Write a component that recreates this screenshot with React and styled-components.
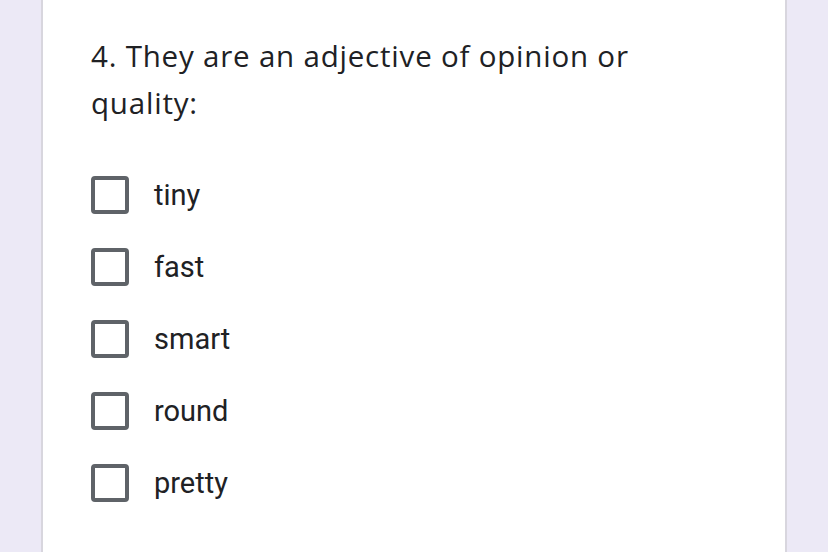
import React from "react";
import styled, { createGlobalStyle } from "styled-components";

const GlobalStyle = createGlobalStyle`
  html, body {
    margin: 0;
    padding: 0;
    background: #ece9f6;
  }
`;

const options = ["tiny", "fast", "smart", "round", "pretty"];

export default function App() {
  return (
    <Page>
      <GlobalStyle />
      <Card>
        <Title>4. They are an adjective of opinion or quality:</Title>
        <Options>
          {options.map((opt) => (
            <Option key={opt}>
              <Box />
              <Label>{opt}</Label>
            </Option>
          ))}
        </Options>
      </Card>
    </Page>
  );
}

const Page = styled.div`
  height: 552px;
  padding-left: 41px;
  background: #ece9f6;
  overflow: hidden;
`;

const Card = styled.div`
  width: 746px;
  height: 100%;
  box-sizing: border-box;
  background: #fff;
  border-left: 2px solid #d8d6de;
  border-right: 2px solid #d8d6de;
  padding: 32px 48px 0 48px;
`;

const Title = styled.div`
  font-family: "Open Sans", Roboto, sans-serif;
  font-size: 29.5px;
  letter-spacing: 0.8px;
  line-height: 47px;
  color: #202124;
  width: 600px;
`;

const Options = styled.div`
  display: flex;
  flex-direction: column;
  margin-top: 33px;
`;

const Option = styled.div`
  display: flex;
  align-items: center;
  height: 72px;
`;

const Box = styled.div`
  width: 38px;
  height: 38px;
  box-sizing: border-box;
  border: 4px solid #5f6368;
  border-radius: 4px;
  margin-right: 25px;
  flex-shrink: 0;
`;

const Label = styled.span`
  font-family: Roboto, "Noto Sans", sans-serif;
  font-size: 29px;
  color: #202124;
`;
